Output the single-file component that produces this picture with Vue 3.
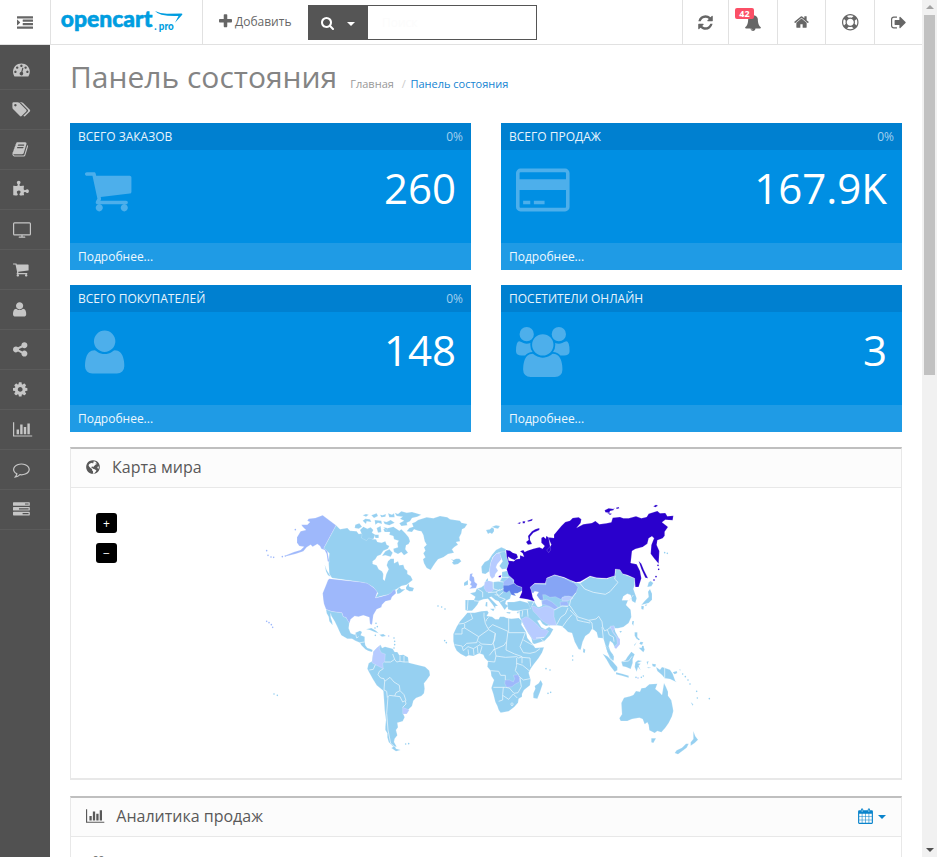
<script setup>
const fa = {
  indent: '0 0 1792 1792|M352 832q0 14-9 23l-288 288q-9 9-23 9-13 0-22.500-9.500t-9.500-22.500v-576q0-13 9.500-22.500t22.500-9.500q14 0 23 9l288 288q9 9 9 23zM32 1280h1728q32 0 32 32v192q0 32-32 32h-1728q-32 0-32-32v-192q0-32 32-32zM672 896h1088q32 0 32 32v192q0 32-32 32h-1088q-32 0-32-32v-192q0-32 32-32zM672 512h1088q32 0 32 32v192q0 32-32 32h-1088q-32 0-32-32v-192q0-32 32-32zM32 128h1728q32 0 32 32v192q0 32-32 32h-1728q-32 0-32-32v-192q0-32 32-32z',
  plus: '192 0 1408 1792|M1600 736v192q0 40-28 68t-68 28h-416v416q0 40-28 68t-68 28h-192q-40 0-68-28t-28-68v-416h-416q-40 0-68-28t-28-68v-192q0-40 28-68t68-28h416v-416q0-40 28-68t68-28h192q40 0 68 28t28 68v416h416q40 0 68 28t28 68z',
  search: '64 0 1664 1792|M1216 832q0-185-131.500-316.500t-316.500-131.500-316.500 131.500-131.500 316.500 131.500 316.500 316.500 131.500 316.500-131.500 131.500-316.500zm512 832q0 52-38 90t-90 38q-54 0-90-38l-343-342q-179 124-399 124-143 0-273.500-55.500t-225-150-150-225-55.500-273.500 55.500-273.500 150-225 225-150 273.500-55.500 273.500 55.500 225 150 150 225 55.500 273.500q0 220-124 399l343 343q37 37 37 90z',
  refresh: '128 0 1536 1792|M1639 1056q0 5-1 7-64 268-268 434.500t-478 166.500q-146 0-282.500-55t-243.500-157l-129 129q-19 19-45 19t-45-19-19-45v-448q0-26 19-45t45-19h448q26 0 45 19t19 45-19 45l-137 137q71 66 161 102t187 36q134 0 250-65t186-179q11-17 53-117 8-23 30-23h192q13 0 22.500 9.500t9.500 22.500zm25-800v448q0 26-19 45t-45 19h-448q-26 0-45-19t-19-45 19-45l138-138q-148-137-349-137-134 0-250 65t-186 179q-11 17-53 117-8 23-30 23h-199q-13 0-22.500-9.500t-9.500-22.500v-7q65-268 270-434.500t480-166.500q146 0 284 55.500t245 156.500l130-129q19-19 45-19t45 19 19 45z',
  bell: '64 0 1664 1792|M912 1696q0-16-16-16-59 0-101.500-42.500t-42.500-101.500q0-16-16-16t-16 16q0 73 51.500 124.500t124.500 51.500q16 0 16-16zm816-288q0 52-38 90t-90 38h-448q0 106-75 181t-181 75-181-75-75-181h-448q-52 0-90-38t-38-90q50-42 91-88t85-119.500 74.500-158.500 50-206 19.500-260q0-152 117-282.500t307-158.500q-8-19-8-39 0-40 28-68t68-28 68 28 28 68q0 20-8 39 190 28 307 158.500t117 282.500q0 139 19.500 260t50 206 74.500 158.500 85 119.500 91 88z',
  home: '64 0 1664 1792|M1472 992v480q0 26-19 45t-45 19h-384v-384h-256v384h-384q-26 0-45-19t-19-45v-480q0-1 .5-3t.5-3l575-474 575 474q1 2 1 6zm223-69l-62 74q-8 9-21 11h-3q-13 0-21-7l-692-577-692 577q-12 8-24 7-13-2-21-11l-62-74q-8-10-7-23.500t11-21.500l719-599q32-26 76-26t76 26l244 204v-195q0-14 9-23t23-9h192q14 0 23 9t9 23v408l219 182q10 8 11 21.500t-7 23.500z',
  ring: '0 0 1792 1792|M896 0q182 0 348 71t286 191 191 286 71 348-71 348-191 286-286 191-348 71-348-71-286-191-191-286-71-348 71-348 191-286 286-191 348-71zm0 128q-190 0-361 90l194 194q82-28 167-28t167 28l194-194q-171-90-361-90zm-678 1129l194-194q-28-82-28-167t28-167l-194-194q-90 171-90 361t90 361zm678 407q190 0 361-90l-194-194q-82 28-167 28t-167-28l-194 194q171 90 361 90zm0-384q159 0 271.500-112.500t112.500-271.500-112.500-271.500-271.500-112.500-271.500 112.500-112.500 271.500 112.500 271.500 271.500 112.500zm484-217l194 194q90-171 90-361t-90-361l-194 194q28 82 28 167t-28 167z',
  exit: '64 0 1600 1792|M704 1440q0 4 1 20t.5 26.500-3 23.500-10 19.500-20.500 6.500h-320q-119 0-203.500-84.500t-84.500-203.500v-704q0-119 84.500-203.500t203.500-84.500h320q13 0 22.500 9.500t9.500 22.500q0 4 1 20t.5 26.500-3 23.500-10 19.500-20.500 6.500h-320q-66 0-113 47t-47 113v704q0 66 47 113t113 47h312l11.500 1 11.500 3 8 5.500 7 9 2 13.500zm928-544q0 26-19 45l-544 544q-19 19-45 19t-45-19-19-45v-288h-448q-26 0-45-19t-19-45v-384q0-26 19-45t45-19h448v-288q0-26 19-45t45-19 45 19l544 544q19 19 19 45z',
  gauge: '0 0 1792 1792|M384 1152q0-53-37.500-90.500t-90.500-37.500-90.500 37.500-37.500 90.500 37.500 90.500 90.500 37.500 90.500-37.500 37.500-90.500zm192-448q0-53-37.500-90.500t-90.500-37.500-90.500 37.500-37.500 90.500 37.500 90.500 90.500 37.500 90.500-37.500 37.500-90.500zm428 481l101-382q6-26-7.500-48.500t-38.500-29.500-48 6.500-30 39.500l-101 382q-60 5-107 43.500t-63 98.500q-20 77 20 146t117 89 146-20 89-117q16-60-6-117t-72-91zm660-33q0-53-37.500-90.500t-90.500-37.500-90.500 37.500-37.500 90.500 37.500 90.500 90.500 37.500 90.500-37.500 37.500-90.500zm-640-640q0-53-37.500-90.500t-90.500-37.500-90.500 37.500-37.500 90.500 37.500 90.500 90.500 37.500 90.500-37.500 37.500-90.500zm448 192q0-53-37.500-90.500t-90.500-37.500-90.500 37.500-37.500 90.500 37.500 90.500 90.500 37.500 90.500-37.500 37.500-90.500zm320 448q0 261-141 483-19 29-54 29h-1402q-35 0-54-29-141-221-141-483 0-182 71-348t191-286 286-191 348-71 348 71 286 191 191 286 71 348z',
  tags: '0 0 1856 1792|M384 448q0-53-37.500-90.500t-90.500-37.500-90.500 37.500-37.500 90.500 37.500 90.500 90.500 37.500 90.500-37.500 37.500-90.500zm1067 576q0 53-37 90l-491 492q-39 37-91 37-53 0-90-37l-715-716q-38-37-64.500-101t-26.500-117v-416q0-52 38-90t90-38h416q53 0 117 26.500t102 64.500l715 714q37 39 37 91zm384 0q0 53-37 90l-491 492q-39 37-91 37-36 0-59-14t-53-45l470-470q37-37 37-90 0-52-37-91l-715-714q-38-38-102-64.500t-117-26.500h224q53 0 117 26.500t102 64.500l715 714q37 39 37 91z',
  book: '64 0 1664 1792|M1639 478q40 57 18 129l-275 906q-19 64-76.500 107.500t-122.500 43.500h-923q-77 0-148.500-53.500t-99.500-131.500q-24-67-2-127 0-4 3-27t4-37q1-8-3-21.500t-3-19.500q2-11 8-21t16.500-23.500 16.500-23.500q23-38 45-91.500t30-91.500q3-10 .5-30t-.5-28q3-11 17-28t17-23q21-36 42-92t25-90q1-9-2.500-32t.5-28q4-13 22-30.500t22-22.500q19-26 42.500-84.500t27.500-96.500q1-8-3-25.500t-2-26.500q2-8 9-18t18-23 17-21q8-12 16.500-30.500t15-35 16-36 19.500-32 26.500-23.500 36-11.500 47.500 5.500l-1 3q38-9 51-9h761q74 0 114 56t18 130l-274 906q-36 119-71.500 153.500t-128.500 34.500h-869q-27 0-38 15-11 16-1 43 24 70 144 70h923q29 0 56-15.500t35-41.500l300-987q7-22 5-57 38 15 59 43zm-1064 2q-4 13 2 22.500t20 9.500h608q13 0 25.500-9.500t16.500-22.500l21-64q4-13-2-22.500t-20-9.500h-608q-13 0-25.500 9.500t-16.500 22.500zm-83 256q-4 13 2 22.500t20 9.500h608q13 0 25.500-9.500t16.500-22.500l21-64q4-13-2-22.500t-20-9.500h-608q-13 0-25.500 9.500t-16.500 22.500z',
  puzzle: '64 0 1728 1792|M1755 1083q0 81-44.500 135t-123.500 54q-41 0-77.500-17.500t-59-38-56.500-38-71-17.500q-110 0-110 124 0 39 16 115t15 115v5q-22 0-33 1-34 3-97.500 11.500t-115.500 13.500-98 5q-61 0-103-26.500t-42-83.500q0-37 17.500-71t38-56.500 38-59 17.500-77.500q0-79-54-123.500t-135-44.500q-84 0-143 45.500t-59 127.500q0 43 15 83t33.500 64.500 33.500 53 15 50.500q0 45-46 89-37 35-117 35-95 0-245-24-9-2-27.500-4t-27.500-4l-13-2q-1 0-3-1-2 0-2-1v-1024q2 1 17.500 3.500t34 5 21.500 3.500q150 24 245 24 80 0 117-35 46-44 46-89 0-22-15-50.500t-33.500-53-33.500-64.500-15-83q0-82 59-127.500t144-45.500q80 0 134 44.500t54 123.500q0 41-17.500 77.500t-38 59-38 56.500-17.500 71q0 57 42 83.500t103 26.500q64 0 180-15t163-17v2q-1 2-3.500 17.500t-5 34-3.500 21.500q-24 150-24 245 0 80 35 117 44 46 89 46 22 0 50.500-15t53-33.500 64.500-33.500 83-15q82 0 127.500 59t45.500 143z',
  tv: '0 0 1920 1792|M160 128h1600q160 0 160 160v1088q0 160-160 160h-1600q-160 0-160-160v-1088q0-160 160-160zM160 256q-32 0-32 32v1088q0 32 32 32h1600q32 0 32-32v-1088q0-32-32-32zM896 1536h128v128h256q32 0 32 32v64q0 32-32 32h-640q-32 0-32-32v-64q0-32 32-32h256z',
  cart: '64 0 1664 1792|M704 1536q0 52-38 90t-90 38-90-38-38-90 38-90 90-38 90 38 38 90zm896 0q0 52-38 90t-90 38-90-38-38-90 38-90 90-38 90 38 38 90zm128-1088v512q0 24-16.500 42.500t-40.500 21.500l-1044 122q13 60 13 70 0 16-24 64h920q26 0 45 19t19 45-19 45-45 19h-1024q-26 0-45-19t-19-45q0-11 8-31.500t16-36 21.500-40 15.500-29.500l-177-823h-204q-26 0-45-19t-19-45 19-45 45-19h256q16 0 28.500 6.500t19.500 15.500 13 24.500 8 26 5.500 29.500 4.500 26h1201q26 0 45 19t19 45z',
  user: '192 0 1408 1792|M1600 1405q0 120-73 189.500t-194 69.500h-874q-121 0-194-69.500t-73-189.500q0-53 3.500-103.500t14-109 26.500-108.500 43-97.500 62-81 85.500-53.500 111.500-20q10 0 43 21.500t73 48 107 48 135 21.500 135-21.500 107-48 73-48 43-21.500q61 0 111.500 20t85.500 53.500 62 81 43 97.500 26.500 108.500 14 109 3.500 103.500zm-320-893q0 159-112.500 271.500t-271.500 112.500-271.500-112.500-112.500-271.500 112.500-271.500 271.500-112.500 271.500 112.500 112.500 271.500z',
  share: '128 0 1536 1792|M1344 1024q133 0 226.500 93.500t93.500 226.500-93.500 226.500-226.500 93.500-226.500-93.500-93.500-226.500q0-12 2-34l-360-180q-92 86-218 86-133 0-226.500-93.500t-93.500-226.500 93.500-226.500 226.500-93.500q126 0 218 86l360-180q-2-22-2-34 0-133 93.500-226.500t226.500-93.500 226.500 93.500 93.500 226.500-93.500 226.500-226.500 93.500q-126 0-218-86l-360 180q2 22 2 34t-2 34l360 180q92-86 218-86z',
  cog: '128 0 1536 1792|M1152 896q0-106-75-181t-181-75-181 75-75 181 75 181 181 75 181-75 75-181zm512-109v222q0 12-8 23t-20 13l-185 28q-19 54-39 91 35 50 107 138 10 12 10 25t-9 23q-27 37-99 108t-94 71q-12 0-26-9l-138-108q-44 23-91 38-16 136-29 186-7 28-36 28h-222q-14 0-24.500-8.500t-11.500-21.500l-28-184q-49-16-90-37l-141 107q-10 9-25 9-14 0-25-11-126-114-165-168-7-10-7-23 0-12 8-23 15-21 51-66.500t54-70.500q-27-50-41-99l-183-27q-13-2-21-12.500t-8-23.500v-222q0-12 8-23t19-13l186-28q14-46 39-92-40-57-107-138-10-12-10-24 0-10 9-23 26-36 98.500-107.500t94.500-71.500q13 0 26 10l138 107q44-23 91-38 16-136 29-186 7-28 36-28h222q14 0 24.500 8.500t11.500 21.500l28 184q49 16 90 37l142-107q9-9 24-9 13 0 25 10 129 119 165 170 7 8 7 22 0 12-8 23-15 21-51 66.500t-54 70.500q26 50 41 98l183 28q13 2 21 12.500t8 23.500z',
  chart: '0 0 2048 1792|M640 896v512h-256v-512zM1024 384v1024h-256v-1024zM2048 1536v128h-2048v-1536h128v1408zM1408 640v768h-256v-768zM1792 256v1152h-256v-1152z',
  comment: '0 0 1792 1792|M896 384q-204 0-381.500 69.500t-282 187.500-104.500 255q0 112 71.500 213.500t201.500 175.500l87 50-27 96q-24 91-70 172 152-63 275-171l43-38 57 6q69 8 130 8 204 0 381.500-69.500t282-187.500 104.500-255-104.500-255-282-187.500-381.500-69.500zm896 512q0 174-120 321.500t-326 233-450 85.500q-70 0-145-8-198 175-460 242-49 14-114 22h-5q-15 0-27-10.500t-16-27.500v-1q-3-4-.5-12t2-10 4.500-9.500l6-9 7-8.500 8-9q7-8 31-34.500t34.500-38 31-39.500 32.500-51 27-59 26-76q-157-89-247.500-220t-90.500-281q0-174 120-321.500t326-233 450-85.500 450 85.500 326 233 120 321.500z',
  tasks: '0 0 1792 1792|M64 128h1664q64 0 64 64v256q0 64-64 64h-1664q-64 0-64-64v-256q0-64 64-64zM1280 256v128h384v-128zM64 640h1664q64 0 64 64v256q0 64-64 64h-1664q-64 0-64-64v-256q0-64 64-64zM640 768v128h1024v-128zM64 1152h1664q64 0 64 64v256q0 64-64 64h-1664q-64 0-64-64v-256q0-64 64-64zM1024 1280v128h640v-128z',
  card: '0 0 1920 1792|M1760 128q66 0 113 47t47 113v1216q0 66-47 113t-113 47h-1600q-66 0-113-47t-47-113v-1216q0-66 47-113t113-47h1600zm-1600 128q-13 0-22.500 9.500t-9.500 22.500v224h1664v-224q0-13-9.500-22.500t-22.500-9.500h-1600zm1600 1280q13 0 22.500-9.500t9.500-22.500v-608h-1664v608q0 13 9.500 22.500t22.500 9.500h1600zm-1504-128v-128h256v128h-256zm384 0v-128h384v128h-384z',
  users: '64 0 1920 1792|M657 896q-162 5-265 128h-134q-82 0-138-40.500t-56-118.500q0-353 124-353 6 0 43.500 21t97.500 42.500 119 21.500q67 0 133-23-5 37-5 66 0 159 81 256zm1071 637q0 120-73 189.500t-194 69.500h-874q-121 0-194-69.500t-73-189.500q0-53 3.500-103.500t14-109 26.500-108.500 43-97.500 62-81 85.500-53.500 111.500-20q10 0 43 21.500t73 48 107 48 135 21.500 135-21.500 107-48 73-48 43-21.500q61 0 111.500 20t85.500 53.500 62 81 43 97.500 26.500 108.500 14 109 3.500 103.500zm-1024-1277q0 106-75 181t-181 75-181-75-75-181 75-181 181-75 181 75 75 181zm704 384q0 159-112.500 271.500t-271.500 112.500-271.500-112.500-112.500-271.500 112.500-271.500 271.500-112.500 271.500 112.500 112.500 271.500zm576 225q0 78-56 118.500t-138 40.500h-134q-103-123-265-128 81-97 81-256 0-29-5-66 66 23 133 23 59 0 119-21.500t97.500-42.500 43.500-21q124 0 124 353zm-128-609q0 106-75 181t-181 75-181-75-75-181 75-181 181-75 181 75 75 181z',
  globe: '0 0 1536 1792|M768 128a768 768 0 1 0 .1 0zM880 250l160 60 130 100-90 30-30 90 100-40 90 30-100 70-110 60-70 90-110 70-40 110-90-70-110 30-20 90 110 30 50 90 130 20 160 80 110 90-60 130-140 150-110 140-60-130-10-200-110-110 10-140-150-80-190-190-60-150 80-130 150-100 170-50 80 70 110-70-90-60zM1280 860l120-60 20 180-70 130-90-120z',
  calendar: '64 0 1664 1792|M192 256h192v-96q0-96 96-96h64q96 0 96 96v96h512v-96q0-96 96-96h64q96 0 96 96v96h192q128 0 128 128v1280q0 128-128 128h-1408q-128 0-128-128v-1280q0-128 128-128zM192 640v288h288v-288zM544 640v288h320v-288zM928 640v288h320v-288zM1312 640v288h288v-288zM192 992v320h288v-320zM544 992v320h320v-320zM928 992v320h320v-320zM1312 992v320h288v-320zM192 1376v288h288v-288zM544 1376v288h320v-288zM928 1376v288h320v-288zM1312 1376v288h288v-288zM480 160v288h64v-288zM1248 160v288h64v-288z',
}
const box = (n) => fa[n].split('|')[0]
const path = (n) => fa[n].split('|')[1]
const ratio = (n) => Number(box(n).split(' ')[2]) / 1792

const menu = ['gauge', 'tags', 'book', 'puzzle', 'tv', 'cart', 'user', 'share', 'cog', 'chart', 'comment', 'tasks']
const tiles = [
  { title: 'ВСЕГО ЗАКАЗОВ', pct: '0%', icon: 'cart', value: '260' },
  { title: 'ВСЕГО ПРОДАЖ', pct: '0%', icon: 'card', value: '167.9K' },
  { title: 'ВСЕГО ПОКУПАТЕЛЕЙ', pct: '0%', icon: 'user', value: '148' },
  { title: 'ПОСЕТИТЕЛИ ОНЛАЙН', pct: '', icon: 'users', value: '3' },
]

// Map geometry: three sheets (Americas, Europe/Africa, Asia/Oceania), each with its own origin.
const america = [
  ['l', '228,76 240,88 262,84 270,92 290,94 296,102 310,100 322,110 330,105 338,118 348,118 352,126 365,128 376,124 380,134 388,138 384,146 370,152 362,164 352,168 346,178 338,184 338,192 350,196 356,208 366,214 370,222 369,238 374,242 379,222 386,208 380,196 384,184 392,176 402,176 402,190 414,184 418,196 430,194 434,206 442,212 442,222 452,228 458,240 440,254 424,258 412,266 405,270 395,282 385,284 365,288 346,294 354,280 340,262 320,250 300,246 216,234 208,222 206,190 208,160 191,145'],
  ['l', '474,60 500,52 520,55 540,48 562,52 570,58 600,62 604,68 622,72 614,84 606,88 604,100 598,112 600,124 588,126 594,134 584,140 576,148 582,158 564,162 550,172 534,178 526,188 518,200 512,210 500,204 492,190 489,178 496,172 490,160 496,152 492,142 500,134 494,124 490,105 484,94 474,92 462,88 456,96 440,94 448,84 460,80 456,70 466,66'],
  ['l', '400,80 418,92 424,88 436,100 446,112 450,124 446,132 438,136 436,148 444,158 432,166 424,156 414,162 402,156 400,146 414,142 412,130 416,122 402,118 400,108 388,104 390,96 374,96 370,88 385,84'],
  ['l', '404,38 414,42 424,34 440,38 456,36 484,44 472,50 456,54 450,64 440,68 442,76 424,78 418,70 432,62 420,56 428,50 410,48'],
  ['l', '300,90 310,80 322,86 332,82 340,90 336,98 346,104 340,118 326,114 320,122 304,114 306,104'],
  ['l', '286,74 298,70 306,80 296,86 284,84'], ['l', '308,62 316,56 330,58 334,66 320,64 318,72'],
  ['l', '344,60 364,62 366,72 354,68 346,74'], ['l', '350,84 362,78 364,96 354,98'],
  ['l', '370,64 380,66 392,60 404,68 388,76 374,72'], ['l', '384,40 396,44 402,40 404,52 388,52'],
  ['l', '308,46 318,42 326,44 318,50'], ['l', '334,46 350,40 354,48 342,54'], ['l', '360,44 368,46 378,42 376,50 364,52'],
  ['l', '344,104 356,104 356,114 346,114'], ['l', '370,82 382,84 380,92'], ['l', '376,154 388,148 398,158 392,170 376,166 366,168'],
  ['l', '438,262 446,250 448,260 462,264 458,274 448,274 438,268'], ['l', '410,272 418,262 424,268 436,268 420,280 412,282'],
  ['l', '318,388 334,384 348,392 356,400 344,396 330,390'], ['l', '358,404 370,402 378,408 366,410'],
  ['l', '198,328 214,334 228,336 246,338 250,350 258,352 268,368 266,385 272,400 284,404 286,398 300,392 306,396 302,406 314,410 314,424 316,436 322,444 330,446 338,450 336,456 324,452 316,448 304,436 300,428 286,422 276,416 262,416 244,406 238,394 232,380 224,364 214,348 212,340 212,352 216,364 218,376 208,364 206,350 200,340'],
  ['l', '362,434 366,444 375,440 398,446 404,456 412,456 418,466 430,464 444,472 446,488 470,494 495,500 508,512 510,526 500,540 492,550 494,566 492,580 484,588 468,594 460,602 456,618 446,628 440,642 430,642 434,652 428,664 412,668 414,682 408,690 412,706 404,716 402,726 410,740 400,740 386,726 382,712 382,700 376,690 376,680 378,660 374,630 372,600 370,572 350,556 338,536 328,518 322,506 326,490 336,484 340,455 350,444'],
  ['l', '404,738 408,746 422,750 408,754 394,744'],
  ['l', '194,194 200,210 206,220 212,230 204,226 198,214'],
  ['m', '146,56 166,54 188,46 228,76 191,145 202,153 208,186 203,184 200,162 194,150 184,146 180,138 172,132 158,140 152,134 140,142 130,154 108,161 78,169 78,166 102,156 122,150 132,140 118,138 111,128 111,112 122,94 138,90 128,80 124,74 142,74 150,66 142,62'],
  ['m', '208,236 300,246 322,250 342,264 352,276 346,294 362,290 384,284 394,278 400,270 406,270 408,280 396,290 392,300 376,304 366,314 364,322 350,328 340,345 338,360 336,374 330,372 328,352 310,346 295,350 284,348 272,358 268,370 258,352 250,350 246,338 228,336 214,334 198,328 192,312 190,300 188,280 196,260 204,240'],
  ['v', '340,455 350,444 362,434 358,446 364,458 376,462 374,486 368,490 370,506 358,500 346,494 336,488 338,470'],
  ['v', '428,622 448,630 440,642 428,642'],
]
const americaLines = '374,486 392,486 404,478 398,462|404,478 410,486 420,484 432,486 446,486|420,468 420,484|432,468 432,486|370,506 358,514 354,524 362,534 372,536 374,544 390,532 402,546 418,556 420,572 408,578 404,588 388,586 382,592 380,574 372,570|328,510 340,508 346,494|374,544 372,570|404,588 420,590 428,606 436,602 438,612 428,622|420,572 432,584 438,602|384,590 380,640 384,690 392,730 404,740|286,398 290,414 296,410|300,428 314,426'
const europe = [
  ['l', '32,176 40,180 48,176 58,176 64,184 54,192 42,194 36,188 40,184'],
  ['l', '138,90 150,88 156,82 162,86 162,94 156,102 150,98 144,102'], ['l', '156,80 168,76 180,78 174,86 164,84'],
  ['l', '72,248 84,240 84,254 72,258'],
  ['l', '124,200 134,186 146,180 156,164 168,150 184,142 198,148 196,156 184,156 170,160 158,172 152,190 148,214 136,222 126,220'],
  ['l', '176,158 196,154 200,170 206,190 200,206 186,208 178,198 188,184 182,170'],
  ['l', '76,300 102,300 106,290 90,280 106,276 110,266 124,262 134,254 138,240 144,234 144,244 160,246 180,244 186,232 186,216 202,212 212,230 222,240 246,262 240,270 226,280 214,282 210,296 198,302 196,312 206,318 200,322 194,330 186,318 176,304 166,300 154,290 148,292 160,304 174,318 166,318 166,326 158,314 144,296 130,298 118,302 112,314 104,324 96,332 82,332 76,330'],
  ['l', '138,306 142,306 142,320 136,318'], ['l', '150,326 164,326 160,334'], ['l', '200,336 212,337 210,341 200,339'], ['l', '230,336 238,334 234,341'],
  ['l', '202,306 222,306 240,302 262,308 272,316 272,328 246,330 234,332 218,332 204,328'],
  ['l', '82,338 104,338 124,334 142,332 146,338 140,348 156,350 166,358 176,358 180,350 192,350 200,354 214,356 236,354 246,362 244,374 258,396 262,414 280,436 286,444 312,442 306,458 296,474 282,492 272,506 266,518 272,540 270,556 252,570 246,582 246,590 236,596 234,608 222,622 206,634 182,638 176,630 172,618 166,606 160,582 154,564 162,540 154,528 152,512 142,500 144,484 134,474 130,464 118,460 100,468 86,466 78,470 62,462 50,452 44,440 40,424 40,402 50,380 60,364 72,350'],
  ['l', '302,540 308,552 300,576 292,596 280,594 280,580 286,566 284,558 296,550'],
  ['l', '238,332 272,326 262,304 282,304 292,320 306,318 304,300 288,290 270,262 284,252 318,250 322,236 344,226 390,240 406,248 420,250 450,230 470,235 500,237 524,227 528,207 540,210 550,223 584,235 584,255 580,267 590,295 586,309 576,303 572,285 562,281 550,289 546,301 564,301 558,315 572,329 574,351 566,369 550,381 534,385 524,385 522,379 526,395 538,417 538,433 526,445 518,429 510,423 506,439 512,455 522,469 520,483 510,475 502,455 496,435 490,415 474,413 470,397 462,390 456,387 448,400 436,408 428,425 422,449 416,448 404,425 396,399 384,396 376,388 364,378 350,376 330,376 326,380 340,388 330,406 314,422 284,432 278,430 274,414 262,396 246,366 240,352'],
  ['w', '292,362 300,360 308,372 318,378 328,376 326,382 316,388 304,382 298,372'],
  ['m', '90,222 98,220 96,228 102,232 104,246 112,252 108,264 88,266 96,258 90,254 94,246 88,240'],
  ['v', '148,214 152,188 160,170 170,160 180,160 184,178 172,192 168,202 174,212 166,222 164,230 156,236 150,228'],
  ['v', '134,246 146,242 158,246 158,262 162,268 154,276 140,276 132,264'],
  ['m', '190,246 206,232 216,236 222,248 218,252 208,256 190,256'],
  ['u', '190,256 206,256 222,250 232,258 246,262 246,272 232,280 222,280 228,288 214,284 208,272 200,278 190,274'],
  ['k', '270,262 284,252 318,254 318,236 344,226 372,234 390,244 404,250 414,262 408,278 396,290 374,288 362,298 346,290 330,292 316,284 308,284 310,300 300,300 290,286 276,278'],
  ['m', '306,302 320,298 336,306 354,322 346,330 330,320 314,314 306,314'],
  ['v', '366,292 386,288 400,294 386,302 366,302'], ['m', '360,306 382,304 386,316 362,318'],
  ['v', '274,318 286,320 296,326 314,318 326,320 342,328 342,350 350,376 330,376 318,370 304,360 292,346 280,334'],
  ['v', '244,358 258,350 268,354 290,372 304,388 316,388 326,394 314,412 290,418 280,420 266,400 254,380'],
  ['m', '196,540 208,540 220,546 224,536 220,526 234,524 240,534 238,546 226,552 216,560 200,562 194,550'],
  ['w', '274,288 284,274 296,276 290,286 300,302 306,316 296,322 286,304 276,298'],
  ['r', '198,150 210,152 218,158 230,162 234,172 224,180 214,176 204,170 206,182 222,184 228,178 240,176 240,166 252,170 248,160 240,154 250,150 254,156 262,152 280,146 298,142 308,146 314,138 304,128 304,114 310,110 318,116 318,108 326,112 328,124 332,150 326,158 320,150 330,140 334,134 324,112 342,114 342,104 352,92 364,78 376,66 390,62 398,54 416,52 424,58 422,69 410,83 430,73 456,69 466,63 478,73 500,70 514,67 518,53 540,51 550,55 566,55 588,49 604,55 620,51 626,41 652,33 660,40 676,39 682,49 700,47 698,61 676,59 666,67 684,81 674,95 674,107 668,115 652,121 650,135 658,153 656,191 642,175 632,161 634,135 642,115 636,109 626,115 622,131 608,141 586,147 576,153 572,189 590,193 600,213 604,235 596,261 586,261 584,235 562,225 548,221 540,209 526,207 524,227 500,235 470,233 450,228 420,245 408,247 390,240 372,232 344,224 320,234 316,250 284,250 270,262 274,272 278,292 284,304 262,298 238,294 246,276 246,262 230,256 222,248 222,240 206,226 200,208 206,190 200,170'],
  ['r', '298,84 298,90 280,98 270,110 270,120 276,132 264,134 258,126 266,120 264,108 276,94 286,88'],
  ['r', '232,70 242,66 240,72'], ['r', '248,64 256,64 254,70 248,70'], ['r', '262,62 278,56 276,62 264,65'],
  ['r', '176,228 184,226 182,232 176,232'],
]
const europeLines = '92,340 98,356 72,370 56,372|74,372 74,384 66,386 66,402 44,402|74,384 84,390 116,410 110,428 80,430 70,440|144,390 116,410|132,338 132,350 136,370 144,386 158,374|146,352 140,358 138,364|158,374 204,394|206,354 206,398|206,398 256,398|144,388 166,400 164,420 156,434 124,432 116,424|204,394 200,424 192,436 160,450|200,424 198,450 224,462 246,470|256,398 246,424 240,440 250,458 270,460 286,456 300,446|166,400 160,430 164,446 148,466|44,434 66,438 70,452 84,440 100,446 102,466|100,446 120,434 126,440 120,460|84,448 86,464|112,440 114,460|144,484 164,486 168,468 196,472 230,470 236,474 246,470 246,490|164,446 168,468|230,474 230,496 226,512 236,524|230,490 248,496 270,514|152,512 176,514 182,526 196,526 196,540|160,562 196,562 208,564|246,472 270,474 272,500|190,562 188,584 188,600 176,604|188,586 206,598 220,582 232,594|208,564 222,580 234,578|240,534 244,560 234,578|236,528 250,540 270,536|212,612 216,608 220,612 216,618 212,612|250,420 268,430 280,436|160,246 160,266 178,272 190,266|112,266 128,276 128,292|144,278 168,276 176,290 196,298|164,284 178,286 190,276|168,276 180,268|196,298 180,306|84,300 82,330|102,302 118,304|190,246 176,244|186,232 206,232|342,330 366,318 384,320|350,374 362,352 376,342 384,324|366,382 382,360 396,344|390,317 402,335 414,351 446,361 468,357 476,349 486,365 488,381 494,393 502,389 510,383 524,385|390,330 410,351 412,361 430,365 450,369|446,361 456,369 458,387|486,381 490,415|502,389 508,405 520,411 522,425|420,250 434,267 460,277 496,283 510,275 534,247 524,237 526,227|408,278 392,300 388,318|566,303 580,285|262,328 264,350|248,332 246,350|282,304 276,316|288,414 312,412|314,426 302,416'
const asia = [
  ['r', '104,46 116,40 130,42 134,38 130,46 120,48 118,54 106,52'], ['r', '138,38 146,36 148,40 140,42'], ['r', '112,54 126,56 120,60'], ['r', '250,34 258,29 264,32 256,37'], ['r', '206,198 214,206 222,226 234,250 226,248 214,222'],
  ['l', '236,262 242,258 250,264 244,274 232,276'], ['l', '240,282 246,296 246,314 236,324 222,328 214,330 224,318 236,306 234,290'], ['l', '214,332 222,334 220,344 214,342'], ['l', '224,330 232,328 228,334'],
  ['l', '187,378 192,378 190,392 186,386'], ['l', '148,408 156,408 152,414'], ['l', '40,460 46,464 44,474 39,472'],
  ['l', '194,412 202,412 202,426 210,436 200,432 194,422'], ['l', '206,458 214,458 220,452 224,464 220,472 212,464'], ['l', '212,440 220,442 216,450 208,446'], ['l', '192,450 200,442 194,452'],
  ['l', '98,476 112,484 130,502 142,516 142,526 134,530 120,512 110,494'], ['l', '106,450 116,462 128,478 132,496 122,488 112,470'], ['l', '138,532 156,536 176,542 176,548 156,542 138,538'],
  ['l', '154,500 166,496 172,486 184,470 194,478 188,492 188,504 182,522 168,516 158,514'], ['l', '196,502 204,496 216,498 202,504 212,506 206,512 212,526 204,516 200,530 194,516'],
  ['l', '230,500 236,498 232,510'], ['l', '230,516 244,518 236,520'], ['l', '246,506 258,508 256,516 248,514'],
  ['l', '258,516 270,524 276,516 300,524 308,536 316,558 320,562 300,552 284,550 276,540 262,528'], ['l', '308,532 320,528 322,534 314,538'],
  ['v', '120,394 132,392 134,402 128,408 138,422 150,432 150,448 138,462 132,456 142,446 140,428 128,412'],
  ['l', '238,568 262,566 256,582 268,592 276,600 282,564 288,576 294,590 294,602 304,616 308,636 310,648 306,664 296,684 286,698 274,712 262,708 254,714 238,706 236,690 232,682 224,688 218,672 208,668 186,672 172,678 152,678 148,670 156,658 154,624 162,608 180,604 190,600 198,588 210,590 214,580 226,578'],
  ['l', '244,730 258,730 250,744 244,742'], ['l', '370,708 376,724 384,734 374,744 362,752 362,742 370,732'], ['l', '356,746 350,758 324,778 314,774 320,766 336,758 348,746'],
  ['l', '362,622 370,628 368,632'], ['l', '328,522 332,524 330,528'],
]
const asiaLines = '284,518 284,550|158,500 176,498 186,484'
const dots = [
  ['m', 20, 152], ['m', 24, 166], ['m', 33, 171], ['m', 41, 172], ['m', 67, 170], ['m', 76, 168], ['m', 106, 89], ['m', 20, 364], ['m', 27, 368], ['m', 34, 374], ['m', 38, 382],
  ['l', 534, 318], ['l', 545, 321], ['l', 555, 327], ['l', 554, 422], ['l', 559, 428], ['l', 42, 582], ['l', 52, 586], ['l', 437, 732], ['l', 446, 731],
  ['l', 348, 370], ['l', 352, 380], ['l', 345, 384], ['v', 386, 408], ['l', 402, 414], ['l', 404, 424], ['l', 404, 434], ['l', 402, 444], ['l', 346, 406],
  ['l', 858, 506], ['l', 870, 510], ['l', 864, 580], ['l', 872, 577], ['l', 938, 468], ['l', 938, 480],
  ['l', 1268, 522], ['l', 1276, 530], ['l', 1284, 540], ['l', 1290, 552], ['l', 1310, 574], ['l', 1312, 594], ['l', 1348, 596], ['l', 1214, 158], ['l', 1222, 160],
  ['r', 1196, 208], ['r', 1194, 196], ['r', 1188, 230], ['r', 1182, 240], ['l', 1128, 532], ['v', 1134, 534], ['l', 1144, 532], ['l', 1150, 528], ['l', 1136, 418], ['l', 1148, 440], ['l', 1142, 430],
]
</script>

<template>
  <div class="page">
    <div class="app">
      <header class="top">
        <a class="toggle"><svg class="ic" :viewBox="box('indent')" width="16" height="16"><path :d="path('indent')" /></svg></a>
        <a class="logo">
          <svg width="151" height="44" viewBox="0 0 151 44">
            <text x="9.800" y="27" class="brand" textLength="91.500" lengthAdjust="spacingAndGlyphs">opencart</text>
            <text x="103.200" y="29.800" class="pro" textLength="19.500" lengthAdjust="spacingAndGlyphs">. pro</text>
            <path d="M104 11Q109 13.600 116 13.800L130.500 13.500Q132.200 13.500 131 15L124 22.800 127.500 16Q118 16.500 110.500 14.800 106 13.500 104 11Z" />
          </svg>
        </a>
        <a class="add"><svg class="ic" :viewBox="box('plus')" width="13" height="16.500"><path :d="path('plus')" /></svg>Добавить</a>
        <div class="search">
          <button><svg class="ic" :viewBox="box('search')" width="13" height="14"><path :d="path('search')" /></svg><i class="caret"></i></button>
          <span>Поиск</span>
        </div>
        <nav class="tools">
          <a class="t1"><svg class="ic" :viewBox="box('refresh')" width="15" height="17"><path :d="path('refresh')" /></svg></a>
          <a class="t2"><svg class="ic" :viewBox="box('bell')" width="16" height="17"><path :d="path('bell')" /></svg><b>42</b></a>
          <a class="t3"><svg class="ic" :viewBox="box('home')" width="15" height="16"><path :d="path('home')" /></svg></a>
          <a class="t4"><svg class="ic" :viewBox="box('ring')" width="16.500" height="16.500"><path :d="path('ring')" /></svg></a>
          <a class="t5"><svg class="ic" :viewBox="box('exit')" width="15" height="17"><path :d="path('exit')" /></svg></a>
        </nav>
      </header>
      <div class="main">
        <aside class="side">
          <a v-for="m in menu" :key="m"><svg class="ic" :viewBox="box(m)" :width="ratio(m) * 16.8" height="16.8"><path :d="path(m)" fill-rule="evenodd" /></svg></a>
        </aside>
        <main class="content">
          <div class="heading">
            <h1>Панель состояния</h1>
            <div class="crumbs"><span>Главная</span><i>/</i><a>Панель состояния</a></div>
          </div>
          <section class="tiles">
            <article v-for="t in tiles" :key="t.title" class="tile">
              <header><span>{{ t.title }}</span><em>{{ t.pct }}</em></header>
              <div class="body">
                <svg class="ic" :viewBox="box(t.icon)" :width="ratio(t.icon) * 50" height="50"><path :d="path(t.icon)" /></svg>
                <strong>{{ t.value }}</strong>
              </div>
              <footer>Подробнее...</footer>
            </article>
          </section>
          <section class="panel map-panel">
            <h3><svg class="ic" :viewBox="box('globe')" width="14" height="16"><path :d="path('globe')" fill-rule="evenodd" /></svg><span>Карта мира</span></h3>
            <div class="map-body">
              <div class="zoom"><button>+</button><button>−</button></div>
              <svg class="map" width="460" height="260" viewBox="0 0 1380 780">
                <polygon v-for="(p, i) in america" :key="'a' + i" :class="p[0]" :points="p[1]" />
                <polyline v-for="(p, i) in americaLines.split('|')" :key="'al' + i" :points="p" />
                <g transform="translate(540 0)">
                  <polygon v-for="(p, i) in europe" :key="'e' + i" :class="p[0]" :points="p[1]" />
                  <polyline v-for="(p, i) in europeLines.split('|')" :key="'el' + i" :points="p" />
                </g>
                <g transform="translate(930 -15)">
                  <polygon v-for="(p, i) in asia" :key="'s' + i" :class="p[0]" :points="p[1]" />
                  <polyline v-for="(p, i) in asiaLines.split('|')" :key="'sl' + i" :points="p" />
                </g>
                <circle v-for="(d, i) in dots" :key="'d' + i" :class="d[0]" :cx="d[1]" :cy="d[2]" r="2.400" />
              </svg>
            </div>
          </section>
          <section class="panel sales">
            <h3><svg class="ic" :viewBox="box('chart')" width="18.300" height="16"><path :d="path('chart')" /></svg><span>Аналитика продаж</span>
              <a><svg class="ic" :viewBox="box('calendar')" width="15" height="16"><path :d="path('calendar')" fill-rule="evenodd" /></svg><i class="caret"></i></a>
            </h3>
            <div class="axis">60</div>
          </section>
        </main>
      </div>
    </div>
    <div class="bar"><i class="up"></i><div class="thumb"></div><i class="down"></i></div>
  </div>
</template>

<style>
body { overflow: hidden; background: #fff; }
</style>
<style scoped>
* { box-sizing: border-box; }
.page { width: 937px; height: 857px; overflow: hidden; display: flex; font: 12px/18px "Open Sans", sans-serif; color: #666; background: #fff; }
.app { width: 922px; height: 857px; display: flex; flex-direction: column; overflow: hidden; }
.ic { display: block; fill: currentColor; flex: none; overflow: visible; }
.top { height: 45px; flex: none; display: flex; border-bottom: 1px solid #e1e1e1; }
.toggle { width: 51px; border-right: 1px solid #e1e1e1; display: flex; align-items: center; padding: 1px 0 0 17px; }
.logo { width: 152px; border-right: 1px solid #e1e1e1; fill: #009de0; }
.logo svg { display: block; }
.brand { font: 900 23.500px Lato, sans-serif; stroke: #009de0; stroke-width: .6px; stroke-linejoin: round; }
.pro { font: 900 10.500px Lato, sans-serif; }
.add { width: 105px; display: flex; align-items: center; padding-left: 16px; gap: 3px; font-size: 12px; padding-bottom: 1px; }
.search { margin-top: 5px; width: 229px; height: 35px; border: 1px solid #555; display: flex; align-items: center; }
.search button { border: 0; width: 59px; height: 33px; background: #555; color: #fff; display: flex; align-items: center; gap: 13px; padding: 0 0 0 12px; }
.search span { color: #fcfcfc; padding-left: 14px; font-size: 12px; }
.caret { display: block; border: 4px solid transparent; border-top-color: currentColor; border-bottom: 0; margin-top: 2px; }
.tools { margin-left: auto; display: flex; }
.tools a { border-left: 1px solid #e1e1e1; display: flex; align-items: center; justify-content: center; position: relative; }
.t1 { width: 46px; } .t2 { width: 49px; } .t3 { width: 48px; } .t4 { width: 49px; } .t5 { width: 48px; }
.t2 b { position: absolute; left: 6px; top: 8px; width: 19px; height: 11px; border-radius: 2px; background: #fb4f66; color: #fff; font-size: 9px; line-height: 12px; text-align: center; }
.main { flex: 1; display: flex; min-height: 0; }
.side { width: 50px; flex: none; background: #515151; color: #c6c6c6; padding-top: 5px; }
.side a { height: 40px; border-bottom: 1px solid #5b5b5b; display: flex; align-items: center; padding-left: 13px; padding-bottom: 1px; }
.content { flex: 1; padding: 0 20px; min-width: 0; }
.heading { height: 78px; display: flex; align-items: baseline; padding-top: 12px; }
h1 { margin: 0; font-size: 30px; font-weight: 400; line-height: 40px; color: #848484; white-space: nowrap; }
.crumbs { margin-left: 13px; display: flex; font-size: 11px; color: #999; white-space: nowrap; }
.crumbs i { font-style: normal; color: #ccc; margin: 0 5px 0 8px; }
.crumbs a { color: #1283d2; margin-left: -.5px; }
.tiles { display: grid; grid-template-columns: 401px 401px; gap: 15px 30px; }
.tile { height: 147px; background: #008fe3; color: #fff; display: flex; flex-direction: column; }
.tile header { height: 27px; background: #0080d0; display: flex; justify-content: space-between; padding: 0 8px; line-height: 27px; color: #e8f4fc; }
.tile em { font-style: normal; color: #a2d0ef; }
.tile .body { flex: 1; display: flex; justify-content: space-between; padding: 15px 15px 0; }
.tile .body .ic { color: #4dafeb; }
.tile strong { font-weight: 400; font-size: 42px; line-height: 50px; margin-top: -2px; }
.tile footer { height: 27px; line-height: 27px; background: #1f9be5; padding: 0 8px; color: #eef8fe; }
.panel { border: 1px solid #e8e8e8; border-top: 2px solid #bfbfbf; margin-top: 15px; }
.panel h3 { margin: 0; height: 39px; background: #fcfcfc; border-bottom: 1px solid #e8e8e8; display: flex; align-items: center; padding: 0 15px 2px; font-size: 16px; font-weight: 400; color: #595959; }
.panel h3 span { margin-left: 12px; }
.map-panel { height: 333px; border-bottom: 2px solid #e8e8e8; }
.map-body { display: flex; padding: 12px 0 0 25px; }
.zoom { display: flex; flex-direction: column; gap: 10px; padding-top: 13px; width: 164px; }
.zoom button { width: 21px; height: 20px; border: 0; border-radius: 3px; background: #000; color: #fff; padding: 0; font: 12px/19px "Open Sans", sans-serif; }
.map { display: block; }
.map polygon { stroke: #fff; stroke-opacity: .55; stroke-width: 1; stroke-linejoin: round; }
.map polyline { fill: none; stroke: #e6f4fb; stroke-width: 2.400; stroke-linejoin: round; }
.l { fill: #96d0f1; } .m { fill: #9eb8fb; } .v { fill: #b7cbff; } .u { fill: #5f80ea; } .k { fill: #86a5f5; } .r { fill: #2a00cc; } .w { fill: #fff; }
.sales { margin-top: 16px; height: 120px; }
.sales h3 a { margin-left: auto; display: flex; align-items: center; gap: 5px; color: #0a84cc; }
.axis { font-size: 11px; line-height: 16px; padding: 15px 0 0 21px; color: #666; }
.bar { width: 15px; background: #f1f1f1; display: flex; flex-direction: column; align-items: center; padding: 5px 0; }
.up { border: 4px solid transparent; border-top: 0; border-bottom: 4px solid #a3a3a3; margin-bottom: 6px; }
.thumb { width: 11px; height: 360px; background: #c1c1c1; }
.down { border: 4px solid transparent; border-bottom: 0; border-top: 4px solid #505050; margin-top: auto; }
</style>
